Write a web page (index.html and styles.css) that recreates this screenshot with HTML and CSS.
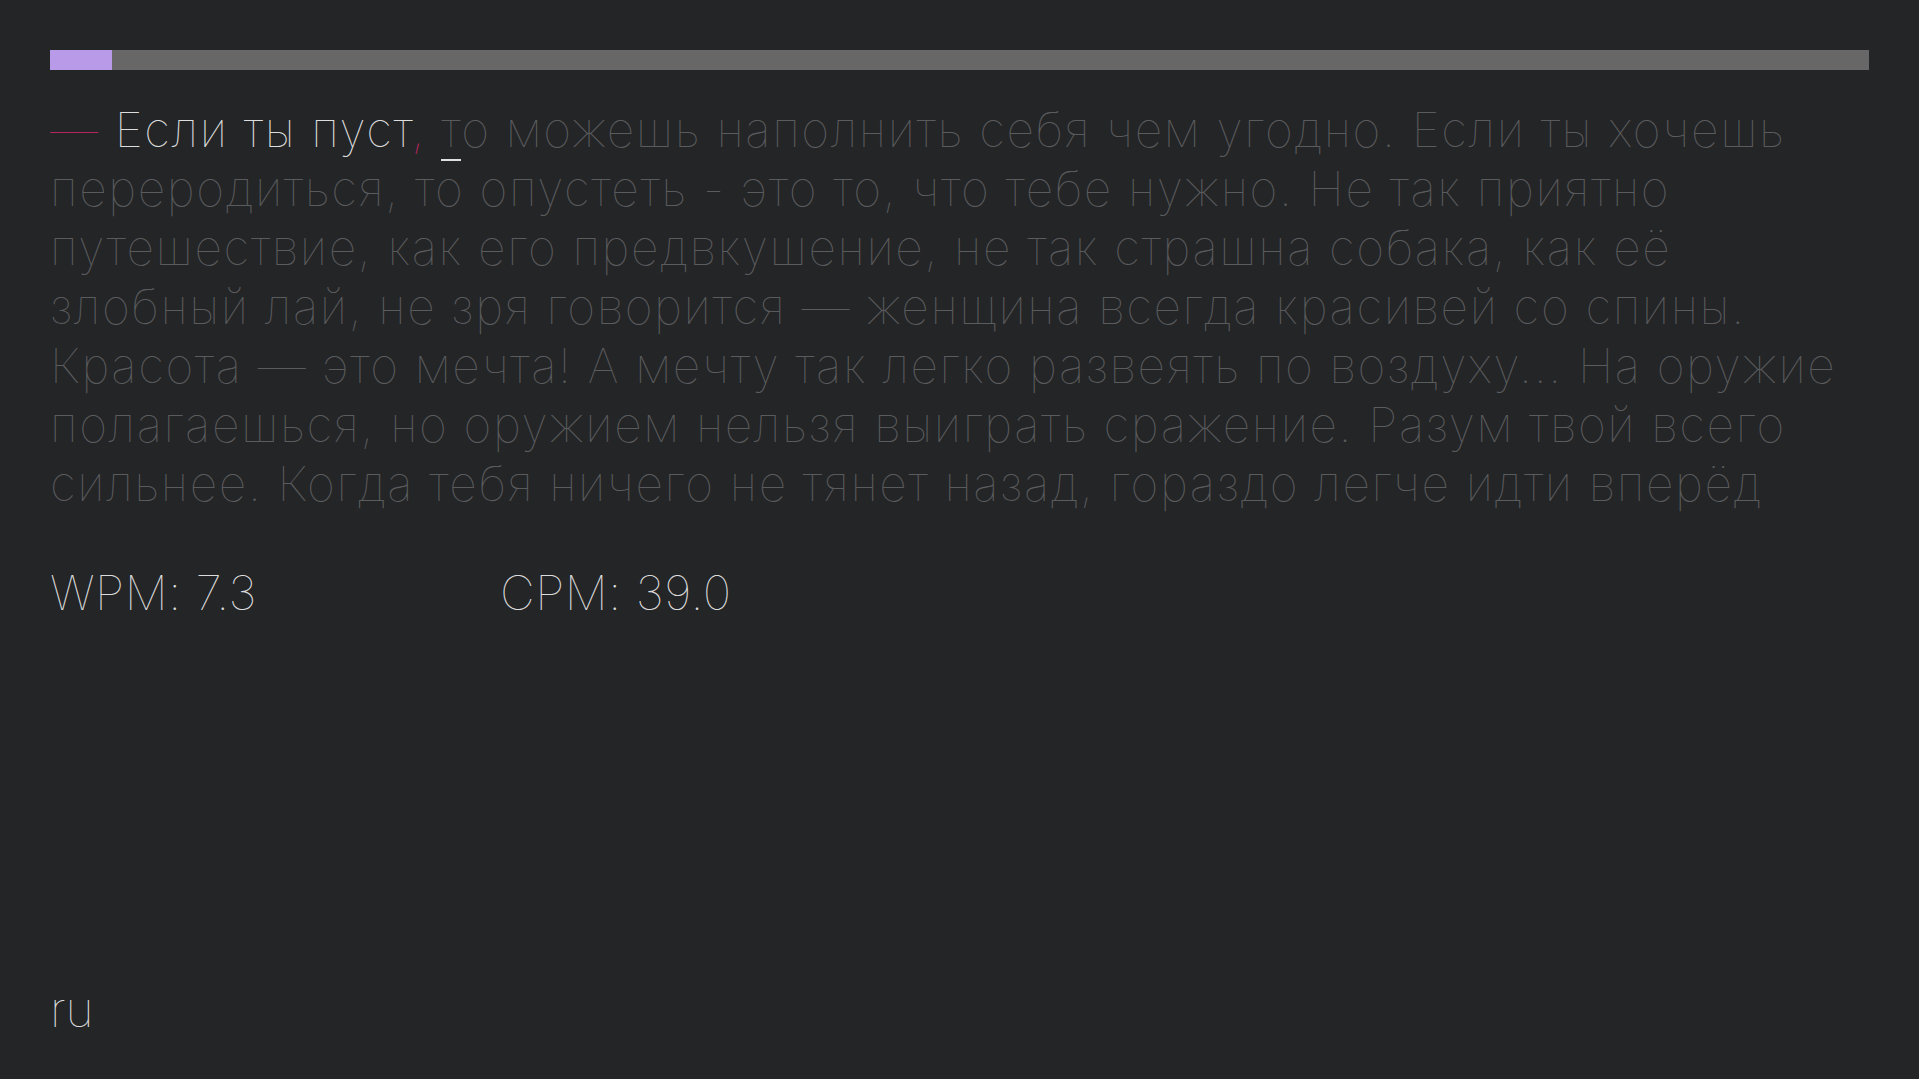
FILE: index.html
```html
<!DOCTYPE html>
<html lang="ru">
<head>
<meta charset="utf-8">
<title>Typing</title>
<link rel="stylesheet" href="styles.css">
</head>
<body>
<div class="app">
  <div class="progress"><div class="progress-fill"></div></div>
  <p class="text"><span class="err">—</span><span class="ok"> Если ты пуст</span><span class="err">,</span><span class="ok"> </span><span class="cursor">т</span>о можешь наполнить себя чем угодно. Если ты хочешь<br>переродиться, то опустеть - это то, что тебе нужно. Не так приятно<br>путешествие, как его предвкушение, не так страшна собака, как её<br>злобный лай, не зря говорится — женщина всегда красивей со спины.<br>Красота — это мечта! А мечту так легко развеять по воздуху... На оружие<br>полагаешься, но оружием нельзя выиграть сражение. Разум твой всего<br>сильнее. Когда тебя ничего не тянет назад, гораздо легче идти вперёд</p>
  <div class="stats">
    <div class="stat">WPM: 7.3</div>
    <div class="stat">CPM: 39.0</div>
  </div>
  <div class="lang">ru</div>
</div>
</body>
</html>
```
FILE: styles.css
```css
html, body {
  margin: 0;
  padding: 0;
  background: #242527;
}
body {
  font-family: Inter, "Noto Sans", sans-serif;
  font-weight: 100;
  color: #dcdcdc;
}
.app {
  box-sizing: border-box;
  height: 100vh;
  padding: 50px 50px 40px 50px;
  display: flex;
  flex-direction: column;
}
.progress {
  height: 20px;
  background: #676767;
  display: flex;
}
.progress-fill {
  width: 62px;
  background: #b89ae8;
}
.text {
  margin: 30px 0 0 0;
  font-size: 48px;
  line-height: 59px;
  letter-spacing: 1.6px;
  color: #5a5b5d;
  white-space: nowrap;
}
.ok { color: #dedede; }
.err { color: #b5265f; }
.cursor {
  border-bottom: 2px solid #e0e0e0;
}
.stats {
  margin-top: 50px;
  display: flex;
  font-size: 48px;
  line-height: 59px;
  letter-spacing: 0.5px;
}
.stat:first-child {
  width: 450px;
}
.lang {
  margin-top: auto;
  font-size: 48px;
  line-height: 59px;
}
```
